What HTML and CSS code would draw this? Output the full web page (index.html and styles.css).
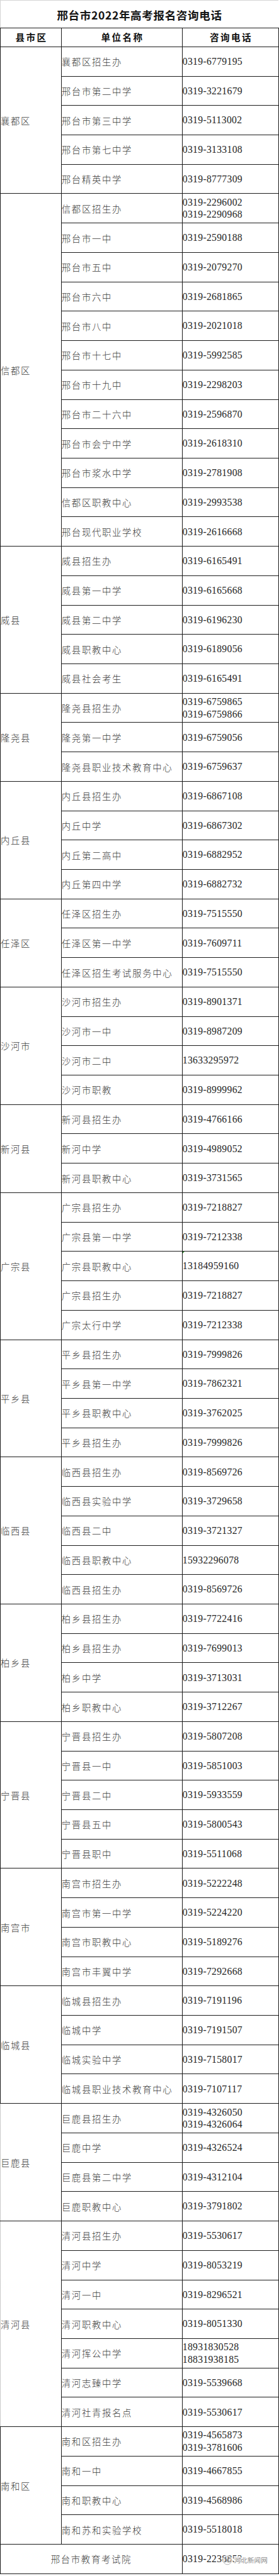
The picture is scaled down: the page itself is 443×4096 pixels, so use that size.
FILE: index.html
```html
<!DOCTYPE html>
<html lang="zh-CN">
<head>
<meta charset="utf-8">
<title>邢台市2022年高考报名咨询电话</title>
<link rel="stylesheet" href="styles.css">
</head>
<body>
<div class="sheet">
  <div class="title">邢台市2022年高考报名咨询电话</div>
  <table class="grid">
    <colgroup><col class="c1"><col class="c2"><col class="c3"></colgroup>
    <thead>
      <tr class="head"><th>县市区</th><th>单位名称</th><th>咨询电话</th></tr>
    </thead>
    <tbody>
      <tr class="r"><td class="county" rowspan="5">襄都区</td><td class="name">襄都区招生办</td><td class="tel">0319-6779195</td></tr>
      <tr class="r"><td class="name">邢台市第二中学</td><td class="tel">0319-3221679</td></tr>
      <tr class="r"><td class="name">邢台市第三中学</td><td class="tel">0319-5113002</td></tr>
      <tr class="r"><td class="name">邢台市第七中学</td><td class="tel">0319-3133108</td></tr>
      <tr class="r"><td class="name">邢台精英中学</td><td class="tel">0319-8777309</td></tr>

      <tr class="r"><td class="county" rowspan="12">信都区</td><td class="name">信都区招生办</td><td class="tel">0319-2296002<br>0319-2290968</td></tr>
      <tr class="r"><td class="name">邢台市一中</td><td class="tel">0319-2590188</td></tr>
      <tr class="r"><td class="name">邢台市五中</td><td class="tel">0319-2079270</td></tr>
      <tr class="r"><td class="name">邢台市六中</td><td class="tel">0319-2681865</td></tr>
      <tr class="r"><td class="name">邢台市八中</td><td class="tel">0319-2021018</td></tr>
      <tr class="r"><td class="name">邢台市十七中</td><td class="tel">0319-5992585</td></tr>
      <tr class="r"><td class="name">邢台市十九中</td><td class="tel">0319-2298203</td></tr>
      <tr class="r"><td class="name">邢台市二十六中</td><td class="tel">0319-2596870</td></tr>
      <tr class="r"><td class="name">邢台市会宁中学</td><td class="tel">0319-2618310</td></tr>
      <tr class="r"><td class="name">邢台市浆水中学</td><td class="tel">0319-2781908</td></tr>
      <tr class="r"><td class="name">信都区职教中心</td><td class="tel">0319-2993538</td></tr>
      <tr class="r"><td class="name">邢台现代职业学校</td><td class="tel">0319-2616668</td></tr>

      <tr class="r"><td class="county" rowspan="5">威县</td><td class="name">威县招生办</td><td class="tel">0319-6165491</td></tr>
      <tr class="r"><td class="name">威县第一中学</td><td class="tel">0319-6165668</td></tr>
      <tr class="r"><td class="name">威县第二中学</td><td class="tel">0319-6196230</td></tr>
      <tr class="r"><td class="name">威县职教中心</td><td class="tel">0319-6189056</td></tr>
      <tr class="r"><td class="name">威县社会考生</td><td class="tel">0319-6165491</td></tr>

      <tr class="r"><td class="county" rowspan="3">隆尧县</td><td class="name">隆尧县招生办</td><td class="tel">0319-6759865<br>0319-6759866</td></tr>
      <tr class="r"><td class="name">隆尧第一中学</td><td class="tel">0319-6759056</td></tr>
      <tr class="r"><td class="name">隆尧县职业技术教育中心</td><td class="tel">0319-6759637</td></tr>

      <tr class="r"><td class="county" rowspan="4">内丘县</td><td class="name">内丘县招生办</td><td class="tel">0319-6867108</td></tr>
      <tr class="r"><td class="name">内丘中学</td><td class="tel">0319-6867302</td></tr>
      <tr class="r"><td class="name">内丘第二高中</td><td class="tel">0319-6882952</td></tr>
      <tr class="r"><td class="name">内丘第四中学</td><td class="tel">0319-6882732</td></tr>

      <tr class="r"><td class="county" rowspan="3">任泽区</td><td class="name">任泽区招生办</td><td class="tel">0319-7515550</td></tr>
      <tr class="r"><td class="name">任泽区第一中学</td><td class="tel">0319-7609711</td></tr>
      <tr class="r"><td class="name">任泽区招生考试服务中心</td><td class="tel">0319-7515550</td></tr>

      <tr class="r"><td class="county" rowspan="4">沙河市</td><td class="name">沙河市招生办</td><td class="tel">0319-8901371</td></tr>
      <tr class="r"><td class="name">沙河市一中</td><td class="tel">0319-8987209</td></tr>
      <tr class="r"><td class="name">沙河市二中</td><td class="tel">13633295972</td></tr>
      <tr class="r"><td class="name">沙河市职教</td><td class="tel">0319-8999962</td></tr>

      <tr class="r"><td class="county" rowspan="3">新河县</td><td class="name">新河县招生办</td><td class="tel">0319-4766166</td></tr>
      <tr class="r"><td class="name">新河中学</td><td class="tel">0319-4989052</td></tr>
      <tr class="r"><td class="name">新河县职教中心</td><td class="tel">0319-3731565</td></tr>

      <tr class="r"><td class="county" rowspan="5">广宗县</td><td class="name">广宗县招生办</td><td class="tel">0319-7218827</td></tr>
      <tr class="r"><td class="name">广宗县第一中学</td><td class="tel">0319-7212338</td></tr>
      <tr class="r"><td class="name">广宗县职教中心</td><td class="tel note">13184959160</td></tr>
      <tr class="r"><td class="name">广宗县招生办</td><td class="tel">0319-7218827</td></tr>
      <tr class="r"><td class="name">广宗太行中学</td><td class="tel">0319-7212338</td></tr>

      <tr class="r"><td class="county" rowspan="4">平乡县</td><td class="name">平乡县招生办</td><td class="tel">0319-7999826</td></tr>
      <tr class="r"><td class="name">平乡县第一中学</td><td class="tel">0319-7862321</td></tr>
      <tr class="r"><td class="name">平乡县职教中心</td><td class="tel">0319-3762025</td></tr>
      <tr class="r"><td class="name">平乡县招生办</td><td class="tel">0319-7999826</td></tr>

      <tr class="r"><td class="county" rowspan="5">临西县</td><td class="name">临西县招生办</td><td class="tel">0319-8569726</td></tr>
      <tr class="r"><td class="name">临西县实验中学</td><td class="tel">0319-3729658</td></tr>
      <tr class="r"><td class="name">临西县二中</td><td class="tel">0319-3721327</td></tr>
      <tr class="r"><td class="name">临西县职教中心</td><td class="tel">15932296078</td></tr>
      <tr class="r"><td class="name">临西县招生办</td><td class="tel">0319-8569726</td></tr>

      <tr class="r"><td class="county" rowspan="4">柏乡县</td><td class="name">柏乡县招生办</td><td class="tel">0319-7722416</td></tr>
      <tr class="r"><td class="name">柏乡县招生办</td><td class="tel">0319-7699013</td></tr>
      <tr class="r"><td class="name">柏乡中学</td><td class="tel">0319-3713031</td></tr>
      <tr class="r"><td class="name">柏乡职教中心</td><td class="tel">0319-3712267</td></tr>

      <tr class="r"><td class="county" rowspan="5">宁晋县</td><td class="name">宁晋县招生办</td><td class="tel">0319-5807208</td></tr>
      <tr class="r"><td class="name">宁晋县一中</td><td class="tel">0319-5851003</td></tr>
      <tr class="r"><td class="name">宁晋县二中</td><td class="tel">0319-5933559</td></tr>
      <tr class="r"><td class="name">宁晋县五中</td><td class="tel">0319-5800543</td></tr>
      <tr class="r"><td class="name">宁晋县职中</td><td class="tel">0319-5511068</td></tr>

      <tr class="r"><td class="county" rowspan="4">南宫市</td><td class="name">南宫市招生办</td><td class="tel">0319-5222248</td></tr>
      <tr class="r"><td class="name">南宫市第一中学</td><td class="tel">0319-5224220</td></tr>
      <tr class="r"><td class="name">南宫市职教中心</td><td class="tel">0319-5189276</td></tr>
      <tr class="r"><td class="name">南宫市丰翼中学</td><td class="tel">0319-7292668</td></tr>

      <tr class="r"><td class="county" rowspan="4">临城县</td><td class="name">临城县招生办</td><td class="tel">0319-7191196</td></tr>
      <tr class="r"><td class="name">临城中学</td><td class="tel">0319-7191507</td></tr>
      <tr class="r"><td class="name">临城实验中学</td><td class="tel">0319-7158017</td></tr>
      <tr class="r"><td class="name">临城县职业技术教育中心</td><td class="tel">0319-7107117</td></tr>

      <tr class="r"><td class="county faint" rowspan="4">巨鹿县</td><td class="name">巨鹿县招生办</td><td class="tel">0319-4326050<br>0319-4326064</td></tr>
      <tr class="r"><td class="name">巨鹿中学</td><td class="tel">0319-4326524</td></tr>
      <tr class="r"><td class="name">巨鹿县第二中学</td><td class="tel">0319-4312104</td></tr>
      <tr class="r"><td class="name">巨鹿职教中心</td><td class="tel">0319-3791802</td></tr>

      <tr class="r"><td class="county faint" rowspan="7">清河县</td><td class="name">清河县招生办</td><td class="tel">0319-5530617</td></tr>
      <tr class="r"><td class="name">清河中学</td><td class="tel">0319-8053219</td></tr>
      <tr class="r"><td class="name">清河一中</td><td class="tel">0319-8296521</td></tr>
      <tr class="r"><td class="name">清河职教中心</td><td class="tel">0319-8051330</td></tr>
      <tr class="r"><td class="name">清河挥公中学</td><td class="tel">18931830528<br>18831938185</td></tr>
      <tr class="r"><td class="name">清河志臻中学</td><td class="tel">0319-5539668</td></tr>
      <tr class="r"><td class="name">清河社青报名点</td><td class="tel">0319-5530617</td></tr>

      <tr class="r"><td class="county" rowspan="4">南和区</td><td class="name">南和区招生办</td><td class="tel">0319-4565873<br>0319-3781606</td></tr>
      <tr class="r"><td class="name">南和一中</td><td class="tel">0319-4667855</td></tr>
      <tr class="r"><td class="name">南和职教中心</td><td class="tel">0319-4568986</td></tr>
      <tr class="r"><td class="name">南和苏和实验学校</td><td class="tel">0319-5518018</td></tr>

      <tr class="r"><td class="office" colspan="2">邢台市教育考试院</td><td class="tel last">0319-2238853<span class="mark"><svg class="mark-icon" viewBox="0 0 20 20" aria-hidden="true"><circle cx="10" cy="10" r="8.5" fill="none" stroke="#fff" stroke-width="2.4"/><circle cx="10" cy="10" r="8.5" fill="none" stroke="#9a9a9a" stroke-width="0.9"/><ellipse cx="8.3" cy="9.2" rx="4" ry="3.2" fill="none" stroke="#9a9a9a" stroke-width="0.9"/><ellipse cx="12" cy="11.4" rx="3.4" ry="2.7" fill="none" stroke="#9a9a9a" stroke-width="0.9"/></svg><span class="mark-text">河北新闻网</span></span></td></tr>
    </tbody>
  </table>
</div>
</body>
</html>
```

FILE: styles.css
```css
html, body {
  margin: 0;
  padding: 0;
  background: #ffffff;
}

body {
  width: 443px;
  font-family: "Noto Sans CJK SC", "Noto Sans CJK JP", sans-serif;
  color: #333333;
}

.sheet {
  width: 442px;
}

.title {
  height: 44px;
  box-sizing: border-box;
  border-top: 1px solid #d4d4d4;
  border-left: 1px solid #d4d4d4;
  display: flex;
  align-items: center;
  justify-content: center;
  font-size: 17.6px;
  font-weight: 700;
  letter-spacing: 0.6px;
  color: #151515;
  padding-top: 1px;
}

.grid {
  width: 442px;
  border-collapse: collapse;
  table-layout: fixed;
}

.c1 { width: 96.8px; }
.c2 { width: 192px; }
.c3 { width: 153.2px; }

.grid th,
.grid td {
  border: 1px solid #1c1c1c;
  padding: 0;
  vertical-align: middle;
}

.head {
  height: 29.9px;
}

.grid th {
  font-size: 14.6px;
  font-weight: 700;
  letter-spacing: 2.4px;
  padding-left: 2.4px;
  text-align: center;
  color: #111111;
  line-height: 18px;
}

.r {
  height: 46.72px;
}

.county,
.name,
.office {
  font-size: 14.4px;
  letter-spacing: 1.66px;
  line-height: 19px;
  font-weight: 300;
  color: #404040;
  padding-top: 2px;
}

.county {
  text-align: left;
  padding-left: 4px;
}

.county.faint {
  border-left-color: #c9c9c9;
}

.name {
  padding-left: 3.6px;
  white-space: nowrap;
}

.office {
  text-align: center;
  padding-left: 1.6px;
}

.tel {
  font-family: "Liberation Serif", "Times New Roman", serif;
  font-size: 15.8px;
  letter-spacing: 0.25px;
  line-height: 19.5px;
  color: #262626;
  padding-left: 2.6px;
  padding-top: 2px;
  white-space: nowrap;
}

.tel.note {
  position: relative;
}

.tel.note::before {
  content: "";
  position: absolute;
  top: 0;
  left: 0;
  border-top: 3px solid #2e8b2e;
  border-right: 3px solid transparent;
}

.tel.last {
  position: relative;
}

.mark {
  position: absolute;
  left: 63px;
  top: 17px;
  display: flex;
  align-items: center;
  gap: 3px;
}

.mark-icon {
  width: 16px;
  height: 16px;
}

.mark-text {
  font-family: "Noto Sans CJK SC", sans-serif;
  font-size: 10.6px;
  letter-spacing: 0;
  color: #8a8a8a;
  line-height: 12px;
  text-shadow: 0 0 1px #fff, 0 0 2px #fff, 0 0 2px #fff;
  background: rgba(255, 255, 255, 0.55);
}
```
